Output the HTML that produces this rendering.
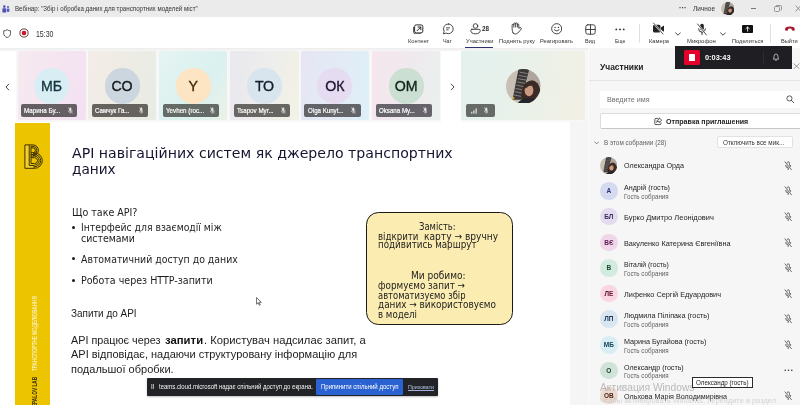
<!DOCTYPE html>
<html lang="uk"><head><meta charset="utf-8"><title>Teams</title>
<style>
html,body{margin:0;padding:0;}
body{width:800px;height:405px;overflow:hidden;position:relative;background:#fff;font-family:"Liberation Sans",sans-serif;}
#r{position:absolute;left:0;top:0;width:800px;height:405px;overflow:hidden;will-change:transform;}
#r div,#r svg{position:absolute;}
.t{position:absolute;white-space:nowrap;line-height:1;transform-origin:0 0;}
</style></head><body><div id="r">
<div style="left:0px;top:0px;width:800px;height:17.2px;background:#ebebeb;"></div>
<div style="left:0px;top:17.2px;width:800px;height:30.5px;background:#ffffff;"></div>
<div style="left:0px;top:47.7px;width:800px;height:74.3px;background:#f7f7f7;"></div>
<div style="left:0px;top:47.7px;width:800px;height:3px;background:linear-gradient(#ededed,#f6f6f6);"></div>
<div style="left:0px;top:50.5px;width:16px;height:71.5px;background:#ffffff;"></div>
<div style="left:441px;top:50.5px;width:19.5px;height:71.5px;background:#ffffff;"></div>
<div style="left:0px;top:122px;width:569.7px;height:283px;background:#ffffff;"></div>
<div style="left:569.7px;top:122px;width:19px;height:283px;background:#f5f5f5;"></div>
<div style="left:588.7px;top:47.7px;width:211.3px;height:357.3px;background:#f6f6f6;"></div>
<div style="left:588.7px;top:80px;width:211.3px;height:0.8px;background:#e4e4e4;"></div>
<div style="left:587.8px;top:48px;width:1.2px;height:357px;background:#fbfbfb;"></div>
<svg style="left:1.5px;top:4.5px" width="8" height="8" viewBox="0 0 8 8"><circle cx="2.3" cy="1.6" r="1.3" fill="#4f52b2"/><circle cx="6" cy="1.9" r="1" fill="#4f52b2"/><rect x="0.4" y="3.3" width="3.8" height="4.3" rx="0.6" fill="#4f52b2"/><rect x="4.8" y="3.4" width="2.6" height="3.6" rx="0.8" fill="#5b5fc7"/></svg>
<svg style="left:720.7px;top:1.6px" width="13.6" height="13.6" viewBox="0 0 34 34"><defs><clipPath id="ca"><circle cx="17" cy="17" r="17"/></clipPath></defs><g clip-path="url(#ca)"><rect width="34" height="34" fill="#c8c0b5"/><path d="M20 0 H34 V18 Q28 8 21 12Z" fill="#aea69e"/><path d="M12.3 0 H22.9 L15.2 30 H6.4Z" fill="#3a3837"/><path d="M13.4 3 L21.2 4.4 M12.6 6.2 L20.4 7.6 M11.8 9.4 L19.6 10.8 M11 12.6 L18.6 14 M10.2 15.8 L17.4 17.2 M9.4 19 L16.4 20.4 M8.6 22.2 L15.6 23.6 M7.8 25.4 L14.8 26.8" stroke="#8d8883" stroke-width="0.9"/><path d="M15.5 34 Q14 19 19.5 13.5 Q26 8 31 14 Q35.5 20 33.5 34Z" fill="#3b2a25"/><ellipse cx="22.6" cy="20.8" rx="4.3" ry="5.9" fill="#c99980"/><path d="M17.6 17.4 Q22 11 28.4 16.8 Q23.4 14.6 19.2 19Z" fill="#3b2a25"/><path d="M11 34 Q17 26.5 25 29 Q31 29.5 34 34Z" fill="#25252b"/><circle cx="7.2" cy="28.6" r="1.1" fill="#d9a92c"/></g></svg>
<div style="left:751px;top:7.8px;width:5px;height:0.8px;background:#7a7a7a;"></div>
<svg style="left:773.5px;top:5px" width="8" height="7" viewBox="0 0 8 7"><rect x="0.5" y="1.5" width="5" height="5" rx="1" fill="none" stroke="#808080" stroke-width="0.8"/><path d="M2 1.5 V1.2 Q2 0.5 2.8 0.5 H6.5 Q7.5 0.5 7.5 1.5 V4.5 Q7.5 5.3 6.7 5.3" fill="none" stroke="#808080" stroke-width="0.8"/></svg>
<svg style="left:795px;top:5px" width="5" height="7" viewBox="0 0 5 7"><path d="M0.5 0.5 L6 6.5 M0.5 6.5 L6 0.5" stroke="#808080" stroke-width="0.8"/></svg>
<svg style="left:3.2px;top:28.9px" width="8.3" height="9.2" viewBox="0 0 9 10"><path d="M4.5 0.7 C5.6 1.6 6.8 2 8.2 2 V4.8 C8.2 7 6.8 8.5 4.5 9.3 C2.2 8.5 0.8 7 0.8 4.8 V2 C2.2 2 3.4 1.6 4.5 0.7Z" fill="none" stroke="#333" stroke-width="0.9"/></svg>
<svg style="left:18.5px;top:28px" width="10" height="10" viewBox="0 0 10 10"><circle cx="5" cy="5" r="4.1" fill="#fff" stroke="#5a2a2a" stroke-width="0.9"/><circle cx="5" cy="5" r="2.3" fill="#d4112b"/></svg>
<div style="left:465px;top:46.9px;width:28.1px;height:1.3px;background:#2f2e6e;"></div>
<div style="left:639.2px;top:24px;width:0.6px;height:19px;background:#e0e0e0;"></div>
<div style="left:769.7px;top:24px;width:0.6px;height:19px;background:#e0e0e0;"></div>
<svg style="left:413.4px;top:23.6px" width="11" height="10.6" viewBox="0 0 11 10.6"><rect x="1.6" y="0.9" width="8.2" height="8" rx="1.7" fill="none" stroke="#2a2a2a" stroke-width="1"/><path d="M0.7 3.2 V8 Q0.7 9.9 2.6 9.9 H7.6" fill="none" stroke="#2a2a2a" stroke-width="0.9" stroke-linecap="round"/><path d="M4 6.8 L7.6 3.2 M5 3 H7.8 V5.8" fill="none" stroke="#2a2a2a" stroke-width="1" stroke-linecap="round" stroke-linejoin="round"/></svg>
<svg style="left:442.2px;top:22.9px" width="12.6" height="12.6" viewBox="0 0 13 13"><path d="M6.7 1 A5 5 0 1 1 4.2 10.4 L1.3 11.3 L2.2 8.5 A5 5 0 0 1 6.7 1Z" fill="none" stroke="#333" stroke-width="0.9" stroke-linecap="round" stroke-linejoin="round"/><path d="M4.6 5 H7.8 M4.8 7 H6.4" fill="none" stroke="#333" stroke-width="0.9" stroke-linecap="round" stroke-linejoin="round"/></svg>
<svg style="left:469.6px;top:22.7px" width="11" height="13" viewBox="0 0 11 13"><circle cx="5.5" cy="3.0" r="2.3" fill="none" stroke="#333" stroke-width="0.9" stroke-linecap="round" stroke-linejoin="round"/><path d="M1.9 6.3 H9.1 Q10.2 6.3 10.2 7.3 Q10.2 10.8 5.5 10.8 Q0.8 10.8 0.8 7.3 Q0.8 6.3 1.9 6.3Z" fill="none" stroke="#333" stroke-width="0.9" stroke-linecap="round" stroke-linejoin="round"/></svg>
<svg style="left:511px;top:22.3px" width="11" height="13" viewBox="0 0 11 13"><path d="M2.1 11 C1.2 9.5 1.1 7 1.1 5.3 V3.2 Q1.1 2.2 2 2.2 Q2.8 2.2 2.8 3 V2 Q2.8 1 3.7 1 Q4.6 1 4.6 1.8 Q4.6 0.9 5.5 0.9 Q6.4 0.9 6.4 1.9 V2.6 Q6.4 2 7.1 2 Q7.8 2 7.8 2.9 V6.3 L9 5.7 Q10 5.3 10.3 6.2 Q10.5 7 9.6 7.9 L6.8 11 Q5.8 12 4.3 12 Q2.9 12 2.1 11Z" fill="none" stroke="#333" stroke-width="0.9" stroke-linecap="round" stroke-linejoin="round"/><path d="M2.8 3 V5.2 M4.6 1.8 V4.9 M6.4 2.6 V5.1" fill="none" stroke="#333" stroke-width="0.9" stroke-linecap="round" stroke-linejoin="round"/></svg>
<svg style="left:550.5px;top:23px" width="11.5" height="11.5" viewBox="0 0 11.5 11.5"><circle cx="5.75" cy="5.75" r="5.1" fill="none" stroke="#333" stroke-width="0.9" stroke-linecap="round" stroke-linejoin="round"/><path d="M3.4 7 Q5.75 9.2 8.1 7" fill="none" stroke="#333" stroke-width="0.9" stroke-linecap="round" stroke-linejoin="round"/><circle cx="4.1" cy="4.4" r="0.7" fill="#333"/><circle cx="7.4" cy="4.4" r="0.7" fill="#333"/></svg>
<svg style="left:584.5px;top:23.5px" width="11" height="11" viewBox="0 0 11 11"><rect x="0.8" y="0.8" width="9.4" height="9.4" rx="2" fill="none" stroke="#333" stroke-width="0.9" stroke-linecap="round" stroke-linejoin="round"/><path d="M5.5 0.8 V10.2 M0.8 5.5 H10.2" fill="none" stroke="#333" stroke-width="0.9" stroke-linecap="round" stroke-linejoin="round"/></svg>
<svg style="left:615px;top:27.5px" width="10" height="3" viewBox="0 0 10 3"><circle cx="1.3" cy="1.4" r="0.95" fill="#333"/><circle cx="5" cy="1.4" r="0.95" fill="#333"/><circle cx="8.7" cy="1.4" r="0.95" fill="#333"/></svg>
<svg style="left:652px;top:22px" width="13" height="13" viewBox="0 0 13 13"><path d="M1 4.2 Q1 2.7 2.5 2.7 H7 Q8.5 2.7 8.5 4.2 V9 Q8.5 10.5 7 10.5 H2.5 Q1 10.5 1 9Z M9 5.6 L11.3 3.8 Q12 3.4 12 4.2 V9 Q12 9.8 11.3 9.4 L9 7.6Z" fill="#222"/><path d="M1.5 1 L11 12" stroke="#fff" stroke-width="1.8"/><path d="M1.5 1 L11 12" stroke="#222" stroke-width="0.8" stroke-linecap="round"/></svg>
<svg style="left:675px;top:31.5px" width="6" height="4" viewBox="0 0 6 4"><path d="M0.6 0.8 L3 3.2 L5.4 0.8" fill="none" stroke="#333" stroke-width="0.9" stroke-linecap="round" stroke-linejoin="round"/></svg>
<svg style="left:695.5px;top:22.5px" width="12" height="13" viewBox="0 0 12 13"><rect x="4.2" y="0.8" width="3.6" height="6.8" rx="1.8" fill="#222"/><path d="M2.6 5.8 Q2.6 9.2 6 9.2 Q9.4 9.2 9.4 5.8 M6 9.2 V11.6" fill="none" stroke="#222" stroke-width="0.9" stroke-linecap="round"/><path d="M1.6 1 L10.4 12" stroke="#fff" stroke-width="1.8"/><path d="M1.6 1 L10.4 12" stroke="#222" stroke-width="0.8" stroke-linecap="round"/></svg>
<svg style="left:719.7px;top:31.5px" width="6" height="4" viewBox="0 0 6 4"><path d="M0.6 0.8 L3 3.2 L5.4 0.8" fill="none" stroke="#333" stroke-width="0.9" stroke-linecap="round" stroke-linejoin="round"/></svg>
<svg style="left:742.2px;top:24.8px" width="11.2" height="8" viewBox="0 0 11.2 8.6" preserveAspectRatio="none"><rect x="0" y="0" width="11.2" height="8.6" rx="1.2" fill="#111"/><path d="M5.6 6.6 V2.4 M3.9 3.9 L5.6 2.2 L7.3 3.9" fill="none" stroke="#fff" stroke-width="0.9" stroke-linecap="round" stroke-linejoin="round"/></svg>
<svg style="left:783.6px;top:26.1px" width="11.8" height="5.4" viewBox="0 0 12 6"><path d="M0.6 3.6 Q0.6 0.6 6 0.6 Q11.4 0.6 11.4 3.6 Q11.4 5.4 10.2 5.2 L8.6 4.9 Q7.9 4.7 7.9 3.9 V3.1 Q6 2.6 4.1 3.1 V3.9 Q4.1 4.7 3.4 4.9 L1.8 5.2 Q0.6 5.4 0.6 3.6Z" fill="#a5162e"/></svg>
<svg style="left:5px;top:82.5px" width="5" height="8" viewBox="0 0 5 8"><path d="M4 0.8 L1 4 L4 7.2" fill="none" stroke="#333" stroke-width="0.9"/></svg>
<svg style="left:449.5px;top:82.5px" width="5" height="8" viewBox="0 0 5 8"><path d="M1 0.8 L4 4 L1 7.2" fill="none" stroke="#333" stroke-width="0.9"/></svg>
<div style="left:17.5px;top:51.2px;width:68.3px;height:69px;background:linear-gradient(100deg,#f6e9ef,#f3e1f2);border-radius:2px;"></div>
<div style="left:34.0px;top:68.4px;width:35.2px;height:35.2px;background:#d9eef4;border-radius:50%;"></div>
<div style="left:21.1px;top:104px;width:56.4px;height:12.6px;background:#655f63;border-radius:2px;"></div>
<svg style="left:68.1px;top:106.8px" width="4.8" height="7.2" viewBox="0 0 4.8 7.2" opacity="0.8"><path d="M2.3 0.6 Q3.4 0.6 3.4 1.7 V3.6 Q3.4 4.7 2.3 4.7 Q1.2 4.7 1.2 3.6 V1.7 Q1.2 0.6 2.3 0.6Z" fill="#fff"/><path d="M0.3 3.4 Q0.3 5.6 2.3 5.6 Q4.3 5.6 4.3 3.4 M2.3 5.6 V6.8" fill="none" stroke="#fff" stroke-width="0.55"/><path d="M0.2 0.3 L4.6 6.6" stroke="#fff" stroke-width="0.55"/></svg>
<div style="left:88.0px;top:51.2px;width:68.3px;height:69px;background:linear-gradient(100deg,#f4ece7,#ecece4 60%,#e8ece5);border-radius:2px;"></div>
<div style="left:104.5px;top:68.4px;width:35.2px;height:35.2px;background:#ccd6de;border-radius:50%;"></div>
<div style="left:91.6px;top:104px;width:56.4px;height:12.6px;background:#66635f;border-radius:2px;"></div>
<svg style="left:138.6px;top:106.8px" width="4.8" height="7.2" viewBox="0 0 4.8 7.2" opacity="0.8"><path d="M2.3 0.6 Q3.4 0.6 3.4 1.7 V3.6 Q3.4 4.7 2.3 4.7 Q1.2 4.7 1.2 3.6 V1.7 Q1.2 0.6 2.3 0.6Z" fill="#fff"/><path d="M0.3 3.4 Q0.3 5.6 2.3 5.6 Q4.3 5.6 4.3 3.4 M2.3 5.6 V6.8" fill="none" stroke="#fff" stroke-width="0.55"/><path d="M0.2 0.3 L4.6 6.6" stroke="#fff" stroke-width="0.55"/></svg>
<div style="left:159.2px;top:51.2px;width:68.3px;height:69px;background:linear-gradient(125deg,#e5f4f1,#daf1f0 60%,#ebf2e6);border-radius:2px;"></div>
<div style="left:175.7px;top:68.4px;width:35.2px;height:35.2px;background:#fde4c2;border-radius:50%;"></div>
<div style="left:162.79999999999998px;top:104px;width:56.4px;height:12.6px;background:#646a66;border-radius:2px;"></div>
<svg style="left:209.79999999999998px;top:106.8px" width="4.8" height="7.2" viewBox="0 0 4.8 7.2" opacity="0.8"><path d="M2.3 0.6 Q3.4 0.6 3.4 1.7 V3.6 Q3.4 4.7 2.3 4.7 Q1.2 4.7 1.2 3.6 V1.7 Q1.2 0.6 2.3 0.6Z" fill="#fff"/><path d="M0.3 3.4 Q0.3 5.6 2.3 5.6 Q4.3 5.6 4.3 3.4 M2.3 5.6 V6.8" fill="none" stroke="#fff" stroke-width="0.55"/><path d="M0.2 0.3 L4.6 6.6" stroke="#fff" stroke-width="0.55"/></svg>
<div style="left:230.4px;top:51.2px;width:68.3px;height:69px;background:linear-gradient(100deg,#e8e8ef,#ededec 50%,#f3f2e5);border-radius:2px;"></div>
<div style="left:246.9px;top:68.4px;width:35.2px;height:35.2px;background:#d8e5ee;border-radius:50%;"></div>
<div style="left:234.0px;top:104px;width:56.4px;height:12.6px;background:#676662;border-radius:2px;"></div>
<svg style="left:281.0px;top:106.8px" width="4.8" height="7.2" viewBox="0 0 4.8 7.2" opacity="0.8"><path d="M2.3 0.6 Q3.4 0.6 3.4 1.7 V3.6 Q3.4 4.7 2.3 4.7 Q1.2 4.7 1.2 3.6 V1.7 Q1.2 0.6 2.3 0.6Z" fill="#fff"/><path d="M0.3 3.4 Q0.3 5.6 2.3 5.6 Q4.3 5.6 4.3 3.4 M2.3 5.6 V6.8" fill="none" stroke="#fff" stroke-width="0.55"/><path d="M0.2 0.3 L4.6 6.6" stroke="#fff" stroke-width="0.55"/></svg>
<div style="left:300.8px;top:51.2px;width:68.3px;height:69px;background:linear-gradient(100deg,#e7e5f4,#e2ebf6 55%,#ddf0f8);border-radius:2px;"></div>
<div style="left:317.3px;top:68.4px;width:35.2px;height:35.2px;background:#e5dcf1;border-radius:50%;"></div>
<div style="left:304.40000000000003px;top:104px;width:56.4px;height:12.6px;background:#63636a;border-radius:2px;"></div>
<svg style="left:351.40000000000003px;top:106.8px" width="4.8" height="7.2" viewBox="0 0 4.8 7.2" opacity="0.8"><path d="M2.3 0.6 Q3.4 0.6 3.4 1.7 V3.6 Q3.4 4.7 2.3 4.7 Q1.2 4.7 1.2 3.6 V1.7 Q1.2 0.6 2.3 0.6Z" fill="#fff"/><path d="M0.3 3.4 Q0.3 5.6 2.3 5.6 Q4.3 5.6 4.3 3.4 M2.3 5.6 V6.8" fill="none" stroke="#fff" stroke-width="0.55"/><path d="M0.2 0.3 L4.6 6.6" stroke="#fff" stroke-width="0.55"/></svg>
<div style="left:372.0px;top:51.2px;width:68.3px;height:69px;background:linear-gradient(100deg,#f5e6ec,#efe9ee 50%,#eaf0ee);border-radius:2px;"></div>
<div style="left:388.5px;top:68.4px;width:35.2px;height:35.2px;background:#cbdfd2;border-radius:50%;"></div>
<div style="left:375.6px;top:104px;width:56.4px;height:12.6px;background:#66646a;border-radius:2px;"></div>
<svg style="left:422.6px;top:106.8px" width="4.8" height="7.2" viewBox="0 0 4.8 7.2" opacity="0.8"><path d="M2.3 0.6 Q3.4 0.6 3.4 1.7 V3.6 Q3.4 4.7 2.3 4.7 Q1.2 4.7 1.2 3.6 V1.7 Q1.2 0.6 2.3 0.6Z" fill="#fff"/><path d="M0.3 3.4 Q0.3 5.6 2.3 5.6 Q4.3 5.6 4.3 3.4 M2.3 5.6 V6.8" fill="none" stroke="#fff" stroke-width="0.55"/><path d="M0.2 0.3 L4.6 6.6" stroke="#fff" stroke-width="0.55"/></svg>
<div style="left:461.4px;top:51.2px;width:124.1px;height:69px;background:linear-gradient(100deg,#e3f1ee,#e8f1ea 45%,#f3f0e4);border-radius:2px;"></div>
<svg style="left:506.2px;top:68.6px" width="34.6" height="34.8" viewBox="0 0 34 34"><defs><clipPath id="cb"><circle cx="17" cy="17" r="17"/></clipPath></defs><g clip-path="url(#cb)"><rect width="34" height="34" fill="#c8c0b5"/><path d="M20 0 H34 V18 Q28 8 21 12Z" fill="#aea69e"/><path d="M12.3 0 H22.9 L15.2 30 H6.4Z" fill="#3a3837"/><path d="M13.4 3 L21.2 4.4 M12.6 6.2 L20.4 7.6 M11.8 9.4 L19.6 10.8 M11 12.6 L18.6 14 M10.2 15.8 L17.4 17.2 M9.4 19 L16.4 20.4 M8.6 22.2 L15.6 23.6 M7.8 25.4 L14.8 26.8" stroke="#8d8883" stroke-width="0.9"/><path d="M15.5 34 Q14 19 19.5 13.5 Q26 8 31 14 Q35.5 20 33.5 34Z" fill="#3b2a25"/><ellipse cx="22.6" cy="20.8" rx="4.3" ry="5.9" fill="#c99980"/><path d="M17.6 17.4 Q22 11 28.4 16.8 Q23.4 14.6 19.2 19Z" fill="#3b2a25"/><path d="M11 34 Q17 26.5 25 29 Q31 29.5 34 34Z" fill="#25252b"/><circle cx="7.2" cy="28.6" r="1.1" fill="#d9a92c"/></g></svg>
<div style="left:466px;top:104px;width:28.8px;height:12.6px;background:#676b68;border-radius:2px;"></div>
<svg style="left:470.5px;top:107.5px" width="7" height="6" viewBox="0 0 7 6"><rect x="0.3" y="3.8" width="1" height="1.8" fill="#fff"/><rect x="2.4" y="2.4" width="1" height="3.2" fill="#fff"/><rect x="4.6" y="0.4" width="1" height="5.2" fill="#fff"/></svg>
<svg style="left:483.6px;top:106.6px" width="4.8" height="7.2" viewBox="0 0 4.8 7.2" opacity="0.8"><path d="M2.3 0.6 Q3.4 0.6 3.4 1.7 V3.6 Q3.4 4.7 2.3 4.7 Q1.2 4.7 1.2 3.6 V1.7 Q1.2 0.6 2.3 0.6Z" fill="#fff"/><path d="M0.3 3.4 Q0.3 5.6 2.3 5.6 Q4.3 5.6 4.3 3.4 M2.3 5.6 V6.8" fill="none" stroke="#fff" stroke-width="0.55"/><path d="M0.2 0.3 L4.6 6.6" stroke="#fff" stroke-width="0.55"/></svg>
<div style="left:15px;top:122.8px;width:35px;height:283px;background:#ecc500;"></div>
<svg style="left:24px;top:144px" width="19.5" height="25.5" viewBox="0 0 19.5 25.5"><g fill="none" stroke="#362900" stroke-width="0.95"><path d="M0.9 0.9 H5.2 V21.5 H10.1 V24.3 H0.9Z" fill="#f2d12e"/><path d="M5.2 0.9 H9 A5.4 5.4 0 0 1 9 11.7"/><path d="M7 2.4 H9 A3.9 3.9 0 0 1 9 10.2"/><path d="M7 3.9 H9 A2.4 2.4 0 0 1 9 8.7 H7"/><path d="M7 2.4 V19.5"/><path d="M9 8.9 H10.6 A7.7 7.7 0 0 1 10.6 24.3 H10.1"/><path d="M7 10.5 H10.6 A6.1 6.1 0 0 1 10.6 22.7"/><path d="M7 12.1 H10.6 A4.5 4.5 0 0 1 10.6 21.1"/><path d="M7 13.7 H10.6 A2.9 2.9 0 0 1 10.6 19.5 H7"/></g></svg>
<div style="left:71.7px;top:225.7px;width:3px;height:3px;background:#1c1c1c;border-radius:50%;"></div>
<div style="left:71.7px;top:257.4px;width:3px;height:3px;background:#1c1c1c;border-radius:50%;"></div>
<div style="left:71.7px;top:278.9px;width:3px;height:3px;background:#1c1c1c;border-radius:50%;"></div>
<div style="left:365.7px;top:211.8px;width:147.5px;height:113.5px;background:#fbedb2;border:1.6px solid #1a1a1a;border-radius:12.5px;box-sizing:border-box;"></div>
<svg style="left:256.4px;top:296.6px" width="6.3" height="9" viewBox="0 0 7 10"><path d="M0.6 0.6 V8 L2.4 6.3 L3.6 9.2 L4.7 8.7 L3.5 5.9 H5.9Z" fill="#fff" stroke="#222" stroke-width="0.7"/></svg>
<div style="left:146.8px;top:378.3px;width:291.2px;height:17.4px;background:#222326;border-radius:1px;box-shadow:0 1px 2px rgba(0,0,0,.25);"></div>
<div style="left:315.6px;top:379.3px;width:87.6px;height:15.3px;background:#2a62d2;border-radius:1px;"></div>
<div style="left:407.6px;top:389.8px;width:26px;height:0.5px;background:#9fb2da;"></div>
<span class="t" style="left:30.6px;top:371.2px;font-size:7px;font-weight:700;color:#faedaa;transform:rotate(-90deg) scaleX(0.665);">ТРАНСПОРТНЕ МОДЕЛЮВАННЯ</span>
<span class="t" style="left:30.6px;top:414px;font-size:7px;font-weight:700;color:#3a2e00;transform:rotate(-90deg) scaleX(0.68);">DREPALOV LAB</span>
<div style="left:600px;top:90.6px;width:200px;height:17.4px;background:#ffffff;border-radius:2px;"></div>
<svg style="left:786.3px;top:95.2px" width="8.6" height="8.6" viewBox="0 0 9 9"><circle cx="3.6" cy="3.6" r="2.7" fill="none" stroke="#424242" stroke-width="0.9"/><path d="M5.6 5.6 L8.2 8.2" stroke="#424242" stroke-width="0.9" stroke-linecap="round"/></svg>
<div style="left:600px;top:112.6px;width:203px;height:16.5px;background:#ffffff;border:0.7px solid #dcdcdc;border-bottom-color:#c8c8c8;border-radius:2px;box-sizing:border-box;"></div>
<svg style="left:654px;top:117.4px" width="8.4" height="8.4" viewBox="0 0 8.4 8.4"><path d="M3.4 1.4 H2 Q0.8 1.4 0.8 2.6 V6.4 Q0.8 7.6 2 7.6 H5.8 Q7 7.6 7 6.4 V5.8" fill="none" stroke="#242424" stroke-width="0.8" stroke-linecap="round"/><path d="M5 0.8 L7.8 3.2 L5 5.6 V4.2 Q3.4 4.1 2.6 5.4 Q2.8 2.6 5 2.3Z" fill="none" stroke="#242424" stroke-width="0.7" stroke-linejoin="round"/></svg>
<svg style="left:593.8px;top:140.6px" width="5.4" height="4" viewBox="0 0 5.4 4"><path d="M0.6 0.8 L2.7 2.9 L4.8 0.8" fill="none" stroke="#555" stroke-width="0.7" stroke-linecap="round"/></svg>
<div style="left:717.3px;top:135.9px;width:75.3px;height:12.4px;background:#ffffff;border:0.6px solid #e2e2e2;border-radius:2px;box-sizing:border-box;"></div>
<svg style="left:600.1px;top:156.6px" width="17.2" height="17.4" viewBox="0 0 34 34"><defs><clipPath id="cc"><circle cx="17" cy="17" r="17"/></clipPath></defs><g clip-path="url(#cc)"><rect width="34" height="34" fill="#c8c0b5"/><path d="M20 0 H34 V18 Q28 8 21 12Z" fill="#aea69e"/><path d="M12.3 0 H22.9 L15.2 30 H6.4Z" fill="#3a3837"/><path d="M13.4 3 L21.2 4.4 M12.6 6.2 L20.4 7.6 M11.8 9.4 L19.6 10.8 M11 12.6 L18.6 14 M10.2 15.8 L17.4 17.2 M9.4 19 L16.4 20.4 M8.6 22.2 L15.6 23.6 M7.8 25.4 L14.8 26.8" stroke="#8d8883" stroke-width="0.9"/><path d="M15.5 34 Q14 19 19.5 13.5 Q26 8 31 14 Q35.5 20 33.5 34Z" fill="#3b2a25"/><ellipse cx="22.6" cy="20.8" rx="4.3" ry="5.9" fill="#c99980"/><path d="M17.6 17.4 Q22 11 28.4 16.8 Q23.4 14.6 19.2 19Z" fill="#3b2a25"/><path d="M11 34 Q17 26.5 25 29 Q31 29.5 34 34Z" fill="#25252b"/><circle cx="7.2" cy="28.6" r="1.1" fill="#d9a92c"/></g></svg>
<svg style="left:784.4px;top:160.8px" width="8.4" height="9.6" viewBox="0 0 8 10"><rect x="2.7" y="0.9" width="2.6" height="4.8" rx="1.3" fill="none" stroke="#3a3a3a" stroke-width="0.75"/><path d="M1.3 4.6 Q1.3 7.2 4 7.2 Q6.7 7.2 6.7 4.6 M4 7.2 V9" fill="none" stroke="#3a3a3a" stroke-width="0.75" stroke-linecap="round"/><path d="M0.6 0.9 L7.4 9.1" stroke="#f6f6f6" stroke-width="1.7"/><path d="M0.6 0.9 L7.4 9.1" stroke="#3a3a3a" stroke-width="0.75" stroke-linecap="round"/></svg>
<div style="left:600.2px;top:182.20000000000002px;width:17.4px;height:17.4px;background:#d5daf0;border-radius:50%;"></div>
<svg style="left:784.4px;top:186.3px" width="8.4" height="9.6" viewBox="0 0 8 10"><rect x="2.7" y="0.9" width="2.6" height="4.8" rx="1.3" fill="none" stroke="#3a3a3a" stroke-width="0.75"/><path d="M1.3 4.6 Q1.3 7.2 4 7.2 Q6.7 7.2 6.7 4.6 M4 7.2 V9" fill="none" stroke="#3a3a3a" stroke-width="0.75" stroke-linecap="round"/><path d="M0.6 0.9 L7.4 9.1" stroke="#f6f6f6" stroke-width="1.7"/><path d="M0.6 0.9 L7.4 9.1" stroke="#3a3a3a" stroke-width="0.75" stroke-linecap="round"/></svg>
<div style="left:600.2px;top:207.9px;width:17.4px;height:17.4px;background:#e3dcee;border-radius:50%;"></div>
<svg style="left:784.4px;top:212.0px" width="8.4" height="9.6" viewBox="0 0 8 10"><rect x="2.7" y="0.9" width="2.6" height="4.8" rx="1.3" fill="none" stroke="#3a3a3a" stroke-width="0.75"/><path d="M1.3 4.6 Q1.3 7.2 4 7.2 Q6.7 7.2 6.7 4.6 M4 7.2 V9" fill="none" stroke="#3a3a3a" stroke-width="0.75" stroke-linecap="round"/><path d="M0.6 0.9 L7.4 9.1" stroke="#f6f6f6" stroke-width="1.7"/><path d="M0.6 0.9 L7.4 9.1" stroke="#3a3a3a" stroke-width="0.75" stroke-linecap="round"/></svg>
<div style="left:600.2px;top:233.8px;width:17.4px;height:17.4px;background:#efd6e8;border-radius:50%;"></div>
<svg style="left:784.4px;top:237.9px" width="8.4" height="9.6" viewBox="0 0 8 10"><rect x="2.7" y="0.9" width="2.6" height="4.8" rx="1.3" fill="none" stroke="#3a3a3a" stroke-width="0.75"/><path d="M1.3 4.6 Q1.3 7.2 4 7.2 Q6.7 7.2 6.7 4.6 M4 7.2 V9" fill="none" stroke="#3a3a3a" stroke-width="0.75" stroke-linecap="round"/><path d="M0.6 0.9 L7.4 9.1" stroke="#f6f6f6" stroke-width="1.7"/><path d="M0.6 0.9 L7.4 9.1" stroke="#3a3a3a" stroke-width="0.75" stroke-linecap="round"/></svg>
<div style="left:600.2px;top:259.3px;width:17.4px;height:17.4px;background:#d3ebde;border-radius:50%;"></div>
<svg style="left:784.4px;top:263.4px" width="8.4" height="9.6" viewBox="0 0 8 10"><rect x="2.7" y="0.9" width="2.6" height="4.8" rx="1.3" fill="none" stroke="#3a3a3a" stroke-width="0.75"/><path d="M1.3 4.6 Q1.3 7.2 4 7.2 Q6.7 7.2 6.7 4.6 M4 7.2 V9" fill="none" stroke="#3a3a3a" stroke-width="0.75" stroke-linecap="round"/><path d="M0.6 0.9 L7.4 9.1" stroke="#f6f6f6" stroke-width="1.7"/><path d="M0.6 0.9 L7.4 9.1" stroke="#3a3a3a" stroke-width="0.75" stroke-linecap="round"/></svg>
<div style="left:600.2px;top:284.8px;width:17.4px;height:17.4px;background:#f9d6e0;border-radius:50%;"></div>
<svg style="left:784.4px;top:288.9px" width="8.4" height="9.6" viewBox="0 0 8 10"><rect x="2.7" y="0.9" width="2.6" height="4.8" rx="1.3" fill="none" stroke="#3a3a3a" stroke-width="0.75"/><path d="M1.3 4.6 Q1.3 7.2 4 7.2 Q6.7 7.2 6.7 4.6 M4 7.2 V9" fill="none" stroke="#3a3a3a" stroke-width="0.75" stroke-linecap="round"/><path d="M0.6 0.9 L7.4 9.1" stroke="#f6f6f6" stroke-width="1.7"/><path d="M0.6 0.9 L7.4 9.1" stroke="#3a3a3a" stroke-width="0.75" stroke-linecap="round"/></svg>
<div style="left:600.2px;top:310.2px;width:17.4px;height:17.4px;background:#d9e6f1;border-radius:50%;"></div>
<svg style="left:784.4px;top:314.29999999999995px" width="8.4" height="9.6" viewBox="0 0 8 10"><rect x="2.7" y="0.9" width="2.6" height="4.8" rx="1.3" fill="none" stroke="#3a3a3a" stroke-width="0.75"/><path d="M1.3 4.6 Q1.3 7.2 4 7.2 Q6.7 7.2 6.7 4.6 M4 7.2 V9" fill="none" stroke="#3a3a3a" stroke-width="0.75" stroke-linecap="round"/><path d="M0.6 0.9 L7.4 9.1" stroke="#f6f6f6" stroke-width="1.7"/><path d="M0.6 0.9 L7.4 9.1" stroke="#3a3a3a" stroke-width="0.75" stroke-linecap="round"/></svg>
<div style="left:600.2px;top:336.3px;width:17.4px;height:17.4px;background:#d8eef4;border-radius:50%;"></div>
<svg style="left:784.4px;top:340.4px" width="8.4" height="9.6" viewBox="0 0 8 10"><rect x="2.7" y="0.9" width="2.6" height="4.8" rx="1.3" fill="none" stroke="#3a3a3a" stroke-width="0.75"/><path d="M1.3 4.6 Q1.3 7.2 4 7.2 Q6.7 7.2 6.7 4.6 M4 7.2 V9" fill="none" stroke="#3a3a3a" stroke-width="0.75" stroke-linecap="round"/><path d="M0.6 0.9 L7.4 9.1" stroke="#f6f6f6" stroke-width="1.7"/><path d="M0.6 0.9 L7.4 9.1" stroke="#3a3a3a" stroke-width="0.75" stroke-linecap="round"/></svg>
<div style="left:600.2px;top:361.6px;width:17.4px;height:17.4px;background:#cfe3d8;border-radius:50%;"></div>
<svg style="left:784.2px;top:369.1px" width="9" height="2.4" viewBox="0 0 9 2.4"><circle cx="1.2" cy="1.2" r="0.8" fill="#333"/><circle cx="4.5" cy="1.2" r="0.8" fill="#333"/><circle cx="7.8" cy="1.2" r="0.8" fill="#333"/></svg>
<div style="left:600.2px;top:387.1px;width:17.4px;height:17.4px;background:#ecd9cf;border-radius:50%;"></div>
<svg style="left:784.4px;top:391.2px" width="8.4" height="9.6" viewBox="0 0 8 10"><rect x="2.7" y="0.9" width="2.6" height="4.8" rx="1.3" fill="none" stroke="#3a3a3a" stroke-width="0.75"/><path d="M1.3 4.6 Q1.3 7.2 4 7.2 Q6.7 7.2 6.7 4.6 M4 7.2 V9" fill="none" stroke="#3a3a3a" stroke-width="0.75" stroke-linecap="round"/><path d="M0.6 0.9 L7.4 9.1" stroke="#f6f6f6" stroke-width="1.7"/><path d="M0.6 0.9 L7.4 9.1" stroke="#3a3a3a" stroke-width="0.75" stroke-linecap="round"/></svg>
<div style="left:691.8px;top:376.7px;width:61.5px;height:11.7px;background:#ffffff;border:0.8px solid #2b2b2b;box-sizing:border-box;z-index:5;"></div>
<div style="left:675.2px;top:46.2px;width:117.3px;height:22.4px;background:#1f1f23;"></div>
<div style="left:683.8px;top:50px;width:16.2px;height:14.5px;background:#e4002b;border-radius:1.5px;"></div>
<div style="left:688.8px;top:54.4px;width:6.3px;height:6.3px;background:#ffffff;border-radius:0.6px;"></div>
<div style="left:763px;top:51px;width:0.6px;height:13px;background:#2c2c32;"></div>
<svg style="left:772px;top:53.2px" width="8" height="8.4" viewBox="0 0 8 8.4"><path d="M1.4 6.2 Q2 5.4 2 3.6 Q2 1 4 1 Q6 1 6 3.6 Q6 5.4 6.6 6.2Z M3.2 7.2 Q4 7.9 4.8 7.2" fill="none" stroke="#e6e6e6" stroke-width="0.7" stroke-linejoin="round"/></svg>
<svg style="left:793px;top:62.8px" width="7" height="6.4" viewBox="0 0 7 6.4"><path d="M0.5 0.5 L6.5 5.9 M0.5 5.9 L6.5 0.5" stroke="#777" stroke-width="0.7"/></svg>
<span class="t" style='left:14.75px;top:5px;font-size:6.6px;line-height:7px;color:#333;transform:scaleX(0.9374);'>Вебінар: &quot;Збір і обробка даних для транспортних моделей міст&quot;</span>
<span class="t" style='left:679.00px;top:4px;font-size:7px;line-height:7px;color:#333;font-weight:700;transform:scaleX(1.0714);'>···</span>
<span class="t" style='left:693.20px;top:5px;font-size:6.6px;line-height:7px;color:#333;transform:scaleX(0.9812);'>Личное</span>
<span class="t" style='left:35.60px;top:29px;font-size:8.7px;line-height:10px;color:#333;transform:scaleX(0.8000);'>15:30</span>
<span class="t" style='left:407.75px;top:38px;font-size:6.0px;line-height:6px;color:#333;transform:scaleX(0.9557);'>Контент</span>
<span class="t" style='left:443.40px;top:38px;font-size:6.0px;line-height:6px;color:#333;transform:scaleX(0.8892);'>Чат</span>
<span class="t" style='left:465.60px;top:38px;font-size:6.0px;line-height:6px;color:#333;transform:scaleX(0.9556);'>Участники</span>
<span class="t" style='left:481.90px;top:25px;font-size:6.8px;line-height:7px;color:#2a2a2a;font-weight:700;transform:scaleX(0.9256);'>28</span>
<span class="t" style='left:498.50px;top:38px;font-size:6.0px;line-height:6px;color:#333;transform:scaleX(0.9678);'>Поднять руку</span>
<span class="t" style='left:539.75px;top:38px;font-size:6.0px;line-height:6px;color:#333;transform:scaleX(0.9475);'>Реагировать</span>
<span class="t" style='left:585.25px;top:38px;font-size:6.0px;line-height:6px;color:#333;transform:scaleX(0.9209);'>Вид</span>
<span class="t" style='left:615.00px;top:38px;font-size:6.0px;line-height:6px;color:#333;transform:scaleX(0.8389);'>Еще</span>
<span class="t" style='left:649.00px;top:38px;font-size:6.0px;line-height:6px;color:#333;transform:scaleX(0.9538);'>Камера</span>
<span class="t" style='left:687.00px;top:38px;font-size:6.0px;line-height:6px;color:#333;transform:scaleX(0.9846);'>Микрофон</span>
<span class="t" style='left:731.70px;top:38px;font-size:6.0px;line-height:6px;color:#333;transform:scaleX(0.9445);'>Поделиться</span>
<span class="t" style='left:781.30px;top:38px;font-size:6.0px;line-height:6px;color:#333;transform:scaleX(0.9400);'>Выйти</span>
<span class="t" style='left:41.03px;top:78px;font-size:14.2px;line-height:16px;color:#12353f;-webkit-text-stroke:0.35px #12353f;'>МБ</span>
<span class="t" style='left:111.61px;top:78px;font-size:14.2px;line-height:16px;color:#14181c;-webkit-text-stroke:0.35px #14181c;'>СО</span>
<span class="t" style='left:188.57px;top:78px;font-size:14.2px;line-height:16px;color:#3a2a05;-webkit-text-stroke:0.35px #3a2a05;'>Y</span>
<span class="t" style='left:254.96px;top:78px;font-size:14.2px;line-height:16px;color:#15202e;-webkit-text-stroke:0.35px #15202e;'>ТО</span>
<span class="t" style='left:325.24px;top:78px;font-size:14.2px;line-height:16px;color:#1e1633;-webkit-text-stroke:0.35px #1e1633;'>ОК</span>
<span class="t" style='left:394.67px;top:78px;font-size:14.2px;line-height:16px;color:#0f2417;-webkit-text-stroke:0.35px #0f2417;'>ОМ</span>
<span class="t" style='left:24.40px;top:106px;font-size:7.4px;line-height:9px;color:#fff;-webkit-text-stroke:0.2px #fff;transform:scaleX(0.8513);'>Марина Бу...</span>
<span class="t" style='left:95.10px;top:106px;font-size:7.4px;line-height:9px;color:#fff;-webkit-text-stroke:0.2px #fff;transform:scaleX(0.8351);'>Самчук Га...</span>
<span class="t" style='left:166.30px;top:106px;font-size:7.4px;line-height:9px;color:#fff;-webkit-text-stroke:0.2px #fff;transform:scaleX(0.8435);'>Yevhen (гос...</span>
<span class="t" style='left:237.40px;top:106px;font-size:7.4px;line-height:9px;color:#fff;-webkit-text-stroke:0.2px #fff;transform:scaleX(0.8405);'>Tsapov Myr...</span>
<span class="t" style='left:308.30px;top:106px;font-size:7.4px;line-height:9px;color:#fff;-webkit-text-stroke:0.2px #fff;transform:scaleX(0.8307);'>Olga Kunyt...</span>
<span class="t" style='left:379.00px;top:106px;font-size:7.4px;line-height:9px;color:#fff;-webkit-text-stroke:0.2px #fff;transform:scaleX(0.8326);'>Oksana My...</span>
<span class="t" style='left:71.80px;top:145px;font-size:14.4px;line-height:16px;color:#14142f;font-family:"DejaVu Sans", "Liberation Sans", sans-serif;transform:scaleX(0.9807);'>API навігаційних систем як джерело транспортних</span>
<span class="t" style='left:71.80px;top:161px;font-size:14.4px;line-height:16px;color:#14142f;font-family:"DejaVu Sans", "Liberation Sans", sans-serif;transform:scaleX(0.9490);'>даних</span>
<span class="t" style='left:71.60px;top:207px;font-size:10px;line-height:11px;color:#1c1c1c;font-family:"DejaVu Sans Condensed", "DejaVu Sans", sans-serif;transform:scaleX(1.0583);'>Що таке API?</span>
<span class="t" style='left:81.20px;top:222px;font-size:10px;line-height:11px;color:#1c1c1c;font-family:"DejaVu Sans Condensed", "DejaVu Sans", sans-serif;transform:scaleX(1.0320);'>Інтерфейс для взаємодії між</span>
<span class="t" style='left:81.20px;top:233px;font-size:10px;line-height:11px;color:#1c1c1c;font-family:"DejaVu Sans Condensed", "DejaVu Sans", sans-serif;transform:scaleX(1.0456);'>системами</span>
<span class="t" style='left:81.20px;top:254px;font-size:10px;line-height:11px;color:#1c1c1c;font-family:"DejaVu Sans Condensed", "DejaVu Sans", sans-serif;transform:scaleX(1.0407);'>Автоматичний доступ до даних</span>
<span class="t" style='left:81.20px;top:275px;font-size:10px;line-height:11px;color:#1c1c1c;font-family:"DejaVu Sans Condensed", "DejaVu Sans", sans-serif;transform:scaleX(1.0588);'>Робота через HTTP-запити</span>
<span class="t" style='left:71.40px;top:308px;font-size:10.3px;line-height:11px;color:#1c1c1c;transform:scaleX(0.9676);'>Запити до API</span>
<span class="t" style='left:71.40px;top:335px;font-size:10.3px;line-height:11px;color:#1c1c1c;transform:scaleX(1.0485);'>API працює через</span>
<span class="t" style='left:165.30px;top:335px;font-size:10.3px;line-height:11px;color:#111;font-weight:700;transform:scaleX(1.0999);'>запити</span>
<span class="t" style='left:203.80px;top:335px;font-size:10.3px;line-height:11px;color:#1c1c1c;transform:scaleX(1.0918);'>. Користувач надсилає запит, а</span>
<span class="t" style='left:71.40px;top:349px;font-size:10.3px;line-height:11px;color:#1c1c1c;transform:scaleX(1.0674);'>API відповідає, надаючи структуровану інформацію для</span>
<span class="t" style='left:71.40px;top:364px;font-size:10.3px;line-height:11px;color:#1c1c1c;transform:scaleX(1.0687);'>подальшої обробки.</span>
<span class="t" style='left:419.40px;top:221px;font-size:9.9px;line-height:11px;color:#1c1c1c;font-family:"DejaVu Sans Condensed", "DejaVu Sans", sans-serif;transform:scaleX(0.9480);'>Замість:</span>
<span class="t" style='left:378.00px;top:231px;font-size:9.9px;line-height:11px;color:#1c1c1c;font-family:"DejaVu Sans Condensed", "DejaVu Sans", sans-serif;transform:scaleX(0.9741);'>відкрити</span>
<span class="t" style='left:423.50px;top:231px;font-size:9.9px;line-height:11px;color:#1c1c1c;font-family:"DejaVu Sans Condensed", "DejaVu Sans", sans-serif;transform:scaleX(1.0232);'>карту → вручну</span>
<span class="t" style='left:378.00px;top:239px;font-size:9.9px;line-height:11px;color:#1c1c1c;font-family:"DejaVu Sans Condensed", "DejaVu Sans", sans-serif;transform:scaleX(0.9845);'>подивитись маршрут</span>
<span class="t" style='left:411.00px;top:270px;font-size:9.9px;line-height:11px;color:#1c1c1c;font-family:"DejaVu Sans Condensed", "DejaVu Sans", sans-serif;transform:scaleX(1.0164);'>Ми робимо:</span>
<span class="t" style='left:378.00px;top:280px;font-size:9.9px;line-height:11px;color:#1c1c1c;font-family:"DejaVu Sans Condensed", "DejaVu Sans", sans-serif;transform:scaleX(0.9925);'>формуємо запит →</span>
<span class="t" style='left:378.00px;top:290px;font-size:9.9px;line-height:11px;color:#1c1c1c;font-family:"DejaVu Sans Condensed", "DejaVu Sans", sans-serif;transform:scaleX(0.9458);'>автоматизуємо збір</span>
<span class="t" style='left:378.00px;top:299px;font-size:9.9px;line-height:11px;color:#1c1c1c;font-family:"DejaVu Sans Condensed", "DejaVu Sans", sans-serif;transform:scaleX(1.0023);'>даних → використовуємо</span>
<span class="t" style='left:378.00px;top:309px;font-size:9.9px;line-height:11px;color:#1c1c1c;font-family:"DejaVu Sans Condensed", "DejaVu Sans", sans-serif;transform:scaleX(0.9758);'>в моделі</span>
<span class="t" style='left:151.00px;top:383px;font-size:6.3px;line-height:7px;color:#f4f4f4;transform:scaleX(1.0000);'>II</span>
<span class="t" style='left:158.50px;top:383px;font-size:6.3px;line-height:7px;color:#f4f4f4;transform:scaleX(0.9518);'>teams.cloud.microsoft надає спільний доступ до екрана.</span>
<span class="t" style='left:320.50px;top:383px;font-size:6.3px;line-height:7px;color:#fff;transform:scaleX(0.9611);'>Припинити спільний доступ</span>
<span class="t" style='left:407.60px;top:384px;font-size:5.8px;line-height:6px;color:#b4c6ea;transform:scaleX(0.9058);'>Приховати</span>
<span class="t" style='left:600.00px;top:62px;font-size:9.2px;line-height:10px;color:#242424;font-weight:700;transform:scaleX(0.9191);'>Участники</span>
<span class="t" style='left:606.70px;top:95px;font-size:7.6px;line-height:9px;color:#707070;transform:scaleX(0.9457);'>Введите имя</span>
<span class="t" style='left:666.20px;top:117px;font-size:7.5px;line-height:9px;color:#242424;font-weight:700;transform:scaleX(0.9453);'>Отправка приглашения</span>
<span class="t" style='left:603.60px;top:139px;font-size:6.6px;line-height:7px;color:#616161;transform:scaleX(0.9577);'>В этом собрании (28)</span>
<span class="t" style='left:722.50px;top:139px;font-size:6.7px;line-height:7px;color:#333;transform:scaleX(0.9429);'>Отключить все мик...</span>
<span class="t" style='left:624.00px;top:161px;font-size:8.0px;line-height:9px;color:#242424;transform:scaleX(0.8941);'>Олександра Орда</span>
<span class="t" style='left:606.55px;top:187px;font-size:6.5px;line-height:7px;color:#27307a;font-weight:700;'>А</span>
<span class="t" style='left:624.00px;top:183px;font-size:8.0px;line-height:9px;color:#242424;transform:scaleX(0.8897);'>Андрій (гость)</span>
<span class="t" style='left:624.00px;top:193px;font-size:6.5px;line-height:7px;color:#616161;transform:scaleX(0.9558);'>Гость собрания</span>
<span class="t" style='left:604.36px;top:213px;font-size:6.5px;line-height:7px;color:#3a2860;font-weight:700;'>БЛ</span>
<span class="t" style='left:624.00px;top:213px;font-size:8.0px;line-height:9px;color:#242424;transform:scaleX(0.9343);'>Бурко Дмитро Леонідович</span>
<span class="t" style='left:604.24px;top:239px;font-size:6.5px;line-height:7px;color:#5a1a4c;font-weight:700;'>ВЄ</span>
<span class="t" style='left:624.00px;top:239px;font-size:8.0px;line-height:9px;color:#242424;transform:scaleX(0.9127);'>Вакуленко Катерина Євгеніївна</span>
<span class="t" style='left:606.55px;top:264px;font-size:6.5px;line-height:7px;color:#164a2e;font-weight:700;'>В</span>
<span class="t" style='left:624.00px;top:260px;font-size:8.0px;line-height:9px;color:#242424;transform:scaleX(0.8513);'>Віталій (гость)</span>
<span class="t" style='left:624.00px;top:270px;font-size:6.5px;line-height:7px;color:#616161;transform:scaleX(0.9558);'>Гость собрания</span>
<span class="t" style='left:604.45px;top:290px;font-size:6.5px;line-height:7px;color:#5e1530;font-weight:700;'>ЛЕ</span>
<span class="t" style='left:624.00px;top:290px;font-size:8.0px;line-height:9px;color:#242424;transform:scaleX(0.9140);'>Лифенко Сергій Едуардович</span>
<span class="t" style='left:604.28px;top:315px;font-size:6.5px;line-height:7px;color:#1b3654;font-weight:700;'>ЛП</span>
<span class="t" style='left:624.00px;top:311px;font-size:8.0px;line-height:9px;color:#242424;transform:scaleX(0.9046);'>Людмила Піліпака (гость)</span>
<span class="t" style='left:624.00px;top:321px;font-size:6.5px;line-height:7px;color:#616161;transform:scaleX(0.9558);'>Гость собрания</span>
<span class="t" style='left:603.85px;top:341px;font-size:6.5px;line-height:7px;color:#134352;font-weight:700;'>МБ</span>
<span class="t" style='left:624.00px;top:337px;font-size:8.0px;line-height:9px;color:#242424;transform:scaleX(0.8987);'>Марина Бугайова (гость)</span>
<span class="t" style='left:624.00px;top:347px;font-size:6.5px;line-height:7px;color:#616161;transform:scaleX(0.9558);'>Гость собрания</span>
<span class="t" style='left:606.37px;top:367px;font-size:6.5px;line-height:7px;color:#163a28;font-weight:700;'>О</span>
<span class="t" style='left:624.00px;top:363px;font-size:8.0px;line-height:9px;color:#242424;transform:scaleX(0.8857);'>Олександр (гость)</span>
<span class="t" style='left:624.00px;top:372px;font-size:6.5px;line-height:7px;color:#616161;transform:scaleX(0.9558);'>Гость собрания</span>
<span class="t" style='left:604.02px;top:392px;font-size:6.5px;line-height:7px;color:#4a2416;font-weight:700;'>ОВ</span>
<span class="t" style='left:624.00px;top:392px;font-size:8.0px;line-height:9px;color:#242424;transform:scaleX(0.8938);'>Ольхова Марія Володимирівна</span>
<span class="t" style='left:600.00px;top:381px;font-size:10.6px;line-height:12px;color:#a0a0a0;opacity:0.7;transform:scaleX(0.9678);'>Активация Windows</span>
<span class="t" style='left:600.00px;top:397px;font-size:6.6px;line-height:7px;color:#b8b8b8;opacity:0.55;transform:scaleX(1.1304);'>Чтобы активировать Windows, перейдите в раздел</span>
<span class="t" style='left:695.80px;top:379px;font-size:6.5px;line-height:7px;color:#222;z-index:6;transform:scaleX(0.9586);'>Олександр (гость)</span>
<span class="t" style='left:704.50px;top:53px;font-size:8px;line-height:9px;color:#fff;font-weight:700;transform:scaleX(0.9246);'>0:03:43</span>

</div></body></html>
